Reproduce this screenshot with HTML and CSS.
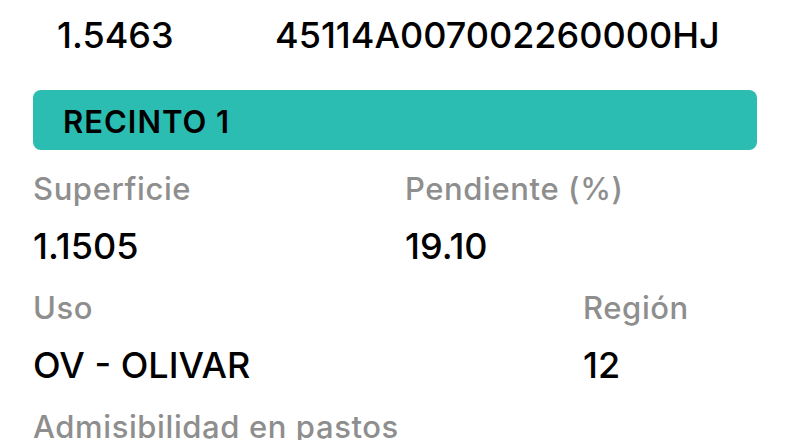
FILE: index.html
```html
<!DOCTYPE html>
<html lang="es">
<head>
  <meta charset="UTF-8" />
  <title>Recinto</title>
  <link rel="stylesheet" href="styles.css">
</head>
<body>
  <div class="parcel">
    <span class="parcel-area">1.5463</span>
    <span class="parcel-ref">45114A007002260000HJ</span>
  </div>

  <div class="section-bar">RECINTO 1</div>

  <div class="field-row">
    <div class="field field-half">
      <div class="label">Superficie</div>
      <div class="value">1.1505</div>
    </div>
    <div class="field">
      <div class="label">Pendiente (%)</div>
      <div class="value">19.10</div>
    </div>
  </div>

  <div class="field-row">
    <div class="field field-wide">
      <div class="label">Uso</div>
      <div class="value">OV - OLIVAR</div>
    </div>
    <div class="field">
      <div class="label">Región</div>
      <div class="value">12</div>
    </div>
  </div>

  <div class="field-row field-row-last">
    <div class="field">
      <div class="label">Admisibilidad en pastos</div>
    </div>
  </div>
</body>
</html>
```

FILE: styles.css
```css
body {
  margin: 0;
  padding: 0 33px;
  background: #fff;
  color: #000;
  font-family: Inter, "Noto Sans", sans-serif;
  overflow: hidden;
}

.parcel {
  display: flex;
  padding: 13px 0 0 24px;
  font-size: 36px;
  line-height: 44px;
  font-weight: 500;
}

.parcel-area {
  width: 218px;
}

.section-bar {
  box-sizing: border-box;
  height: 60px;
  margin-top: 33px;
  padding: 4px 0 0 30px;
  background: #2bbdb2;
  border-radius: 8px;
  font-size: 31px;
  line-height: 56px;
  font-weight: 600;
  letter-spacing: 1px;
}

.field-row {
  display: flex;
}

.field-half {
  width: 372px;
}

.field-wide {
  width: 550px;
}

.label {
  color: #8e8e8e;
  font-size: 31px;
  line-height: 36px;
  font-weight: 500;
  letter-spacing: 0.6px;
  margin-top: 21px;
}

.value {
  font-size: 36px;
  line-height: 44px;
  font-weight: 500;
  margin-top: 17px;
}

.field-row + .field-row .label {
  margin-top: 22px;
}

.field-row-last .label {
  margin-top: 16px;
}
```
